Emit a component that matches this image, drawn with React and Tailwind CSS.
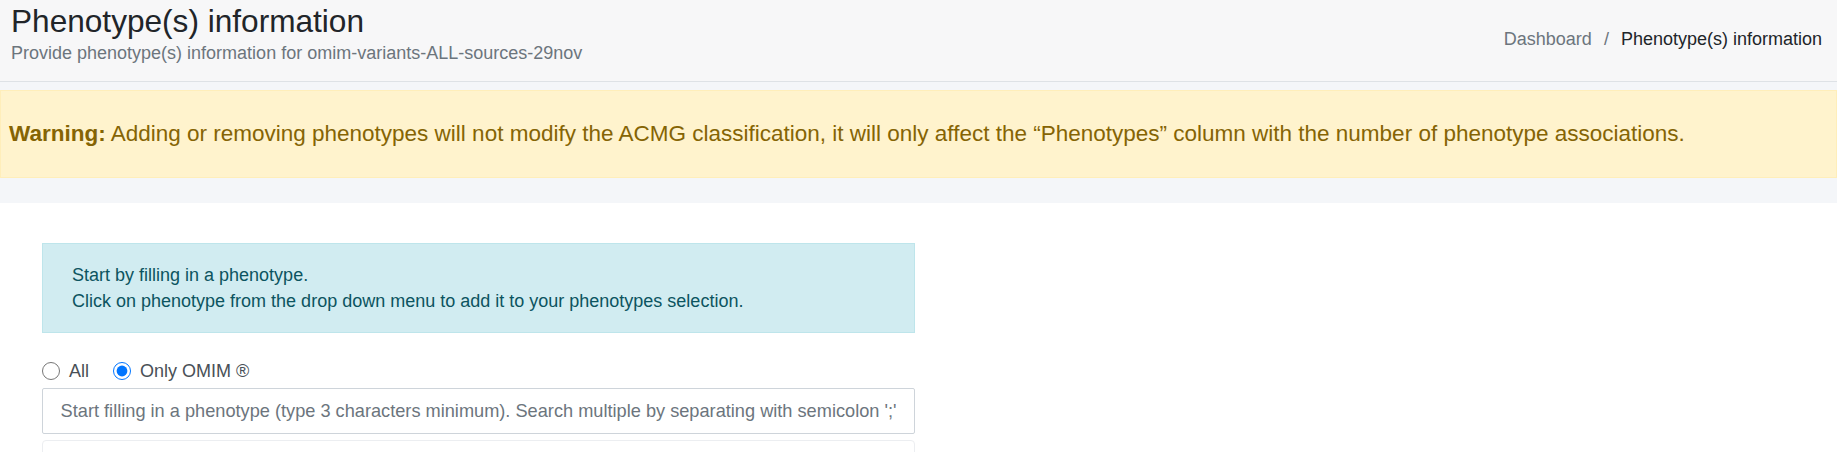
import React from "react";

export default function App() {
  return (
    <div className="font-['Liberation_Sans',Arial,Helvetica,sans-serif] bg-white min-h-screen text-[#212529]">
      <header className="h-[82px] bg-[#f7f7f8] border-b border-[#dee2e6] flex justify-between items-start pl-[11px] pr-[15px]">
        <div className="pt-[2px]">
          <h1 className="text-[31.6px] leading-[38px] font-normal text-[#212529] m-0">
            Phenotype(s) information
          </h1>
          <div className="text-[18px] leading-[26px] text-[#6c757d]">
            Provide phenotype(s) information for omim-variants-ALL-sources-29nov
          </div>
        </div>
        <nav className="mt-[26px] flex text-[18px] leading-[26px]">
          <span className="text-[#6c757d]">Dashboard</span>
          <span className="text-[#6c757d] mx-[12px]">/</span>
          <span className="text-[#212529]">Phenotype(s) information</span>
        </nav>
      </header>

      <section className="bg-[#f4f6f9] pt-[8px] pb-[25px]">
        <div className="bg-[#fff3cd] border border-[#ffeeba] text-[#856404] text-[22.5px] leading-[34px] py-[26px] pl-[8px] pr-[22px]">
          <b className="font-bold">Warning:</b> Adding or removing phenotypes will not modify the ACMG classification, it will only affect the “Phenotypes” column with the number of phenotype associations.
        </div>
      </section>

      <main className="pt-[40px] pl-[42px]">
        <div className="w-[873px]">
          <div className="bg-[#d1ecf1] border border-[#bee5eb] text-[#0c5460] text-[18px] leading-[26px] py-[18px] pl-[29px] pr-[20px]">
            <div>Start by filling in a phenotype.</div>
            <div>Click on phenotype from the drop down menu to add it to your phenotypes selection.</div>
          </div>

          <div className="mt-[24px] h-[27px] flex items-center text-[18px] leading-[26px] text-[#495057]">
            <label className="flex items-center">
              <input type="radio" name="src" className="m-0 w-[18px] h-[18px]" />
              <span className="ml-[9px]">All</span>
            </label>
            <label className="flex items-center ml-[24px]">
              <input type="radio" name="src" defaultChecked className="m-0 w-[18px] h-[18px]" />
              <span className="ml-[9px]">Only OMIM ®</span>
            </label>
          </div>

          <input
            type="text"
            placeholder="Start filling in a phenotype (type 3 characters minimum). Search multiple by separating with semicolon ';'"
            className="mt-[4px] block w-full h-[46px] border border-[#ced4da] rounded-[2px] bg-white px-[17.6px] text-[18.2px] text-[#495057] placeholder:text-[#6c757d] outline-none"
          />

          <div className="mt-[6px] h-[120px] border border-[#eceef1] rounded-[4px] bg-white"></div>
        </div>
      </main>
    </div>
  );
}
